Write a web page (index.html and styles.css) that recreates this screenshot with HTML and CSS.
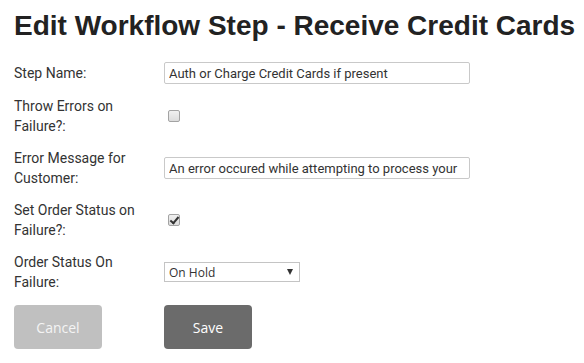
FILE: index.html
```html
<!DOCTYPE html>
<html lang="en">
  <head>
    <meta charset="UTF-8" />
    <meta name="viewport" content="width=device-width, initial-scale=1.0" />
    <title>Edit Workflow Step</title>
    <link rel="stylesheet" href="styles.css">
  </head>
  <body>
    <div class="container">
      <h1>Edit Workflow Step - Receive Credit Cards</h1>

      <form class="step-form">
        <div class="row">
          <label for="step-name">Step Name:</label>
          <input id="step-name" type="text" class="text-input" value="Auth or Charge Credit Cards if present" />
        </div>

        <div class="row">
          <label for="throw-errors">Throw Errors on Failure?:</label>
          <div><input id="throw-errors" type="checkbox" class="check" /></div>
        </div>

        <div class="row">
          <label for="error-message">Error Message for Customer:</label>
          <input id="error-message" type="text" class="text-input" value="An error occured while attempting to process your" />
        </div>

        <div class="row">
          <label for="set-status">Set Order Status on Failure?:</label>
          <div><input id="set-status" type="checkbox" class="check" checked /></div>
        </div>

        <div class="row">
          <label for="order-status">Order Status On Failure:</label>
          <div>
            <span class="select-wrap">
              <select id="order-status" class="select">
                <option>On Hold</option>
                <option>Pending</option>
                <option>Cancelled</option>
              </select>
            </span>
          </div>
        </div>

        <div class="row buttons">
          <button type="button" class="btn btn-cancel">Cancel</button>
          <button type="submit" class="btn btn-save">Save</button>
        </div>
      </form>
    </div>
  </body>
</html>
```

FILE: styles.css
```css
body {
  margin: 0;
  padding: 10px 14px;
  font-family: Roboto, "Liberation Sans", Arial, sans-serif;
  color: #333;
  background: #fff;
}
h1 {
  font-family: "Liberation Sans", Arial, sans-serif;
  font-size: 28px;
  font-weight: bold;
  color: #222;
  margin: 0 0 20px;
  line-height: 32px;
  white-space: nowrap;
}
.step-form {
  display: flex;
  flex-direction: column;
  gap: 12px;
}
.row {
  display: grid;
  grid-template-columns: 140px auto;
  column-gap: 10px;
  align-items: center;
}
.row label {
  font-size: 14px;
  line-height: 20px;
}
.text-input {
  box-sizing: border-box;
  width: 306px;
  height: 22px;
  margin: 0;
  padding: 0 4px;
  border: 1px solid #c9c9c9;
  border-radius: 2px;
  font-family: Roboto, "Liberation Sans", sans-serif;
  font-size: 13px;
  color: #333;
  outline: none;
}
.check {
  appearance: none;
  -webkit-appearance: none;
  display: block;
  position: relative;
  width: 12px;
  height: 12px;
  margin: 0 0 0 4px;
  border: 1px solid #a3a3a3;
  border-radius: 2px;
  background: linear-gradient(#f0f0f0, #dcdcdc);
}
.check:checked::after {
  content: "";
  position: absolute;
  left: 3px;
  top: 0px;
  width: 3px;
  height: 7px;
  border: solid #333;
  border-width: 0 2px 2px 0;
  transform: rotate(40deg);
}
.select-wrap {
  position: relative;
  display: inline-block;
}
.select-wrap::after {
  content: "";
  position: absolute;
  right: 7px;
  top: 7px;
  border-left: 3.5px solid transparent;
  border-right: 3.5px solid transparent;
  border-top: 6px solid #333;
  pointer-events: none;
}
.select {
  appearance: none;
  -webkit-appearance: none;
  display: block;
  box-sizing: border-box;
  width: 136px;
  height: 20px;
  margin: 0;
  padding: 0 4px;
  border: 1px solid #c4c4c4;
  border-radius: 0;
  background: #fff;
  font-family: "Open Sans", sans-serif;
  font-size: 12px;
  color: #333;
}
.buttons {
  margin-top: 1px;
}
.btn {
  width: 88px;
  height: 44px;
  border: none;
  border-radius: 4px;
  font-family: "Open Sans", sans-serif;
  font-size: 14px;
  cursor: pointer;
}
.btn-cancel {
  background-color: #c0c0c0;
  color: #f4f4f4;
}
.btn-save {
  background-color: #6b6b6b;
  color: #fff;
}
```
